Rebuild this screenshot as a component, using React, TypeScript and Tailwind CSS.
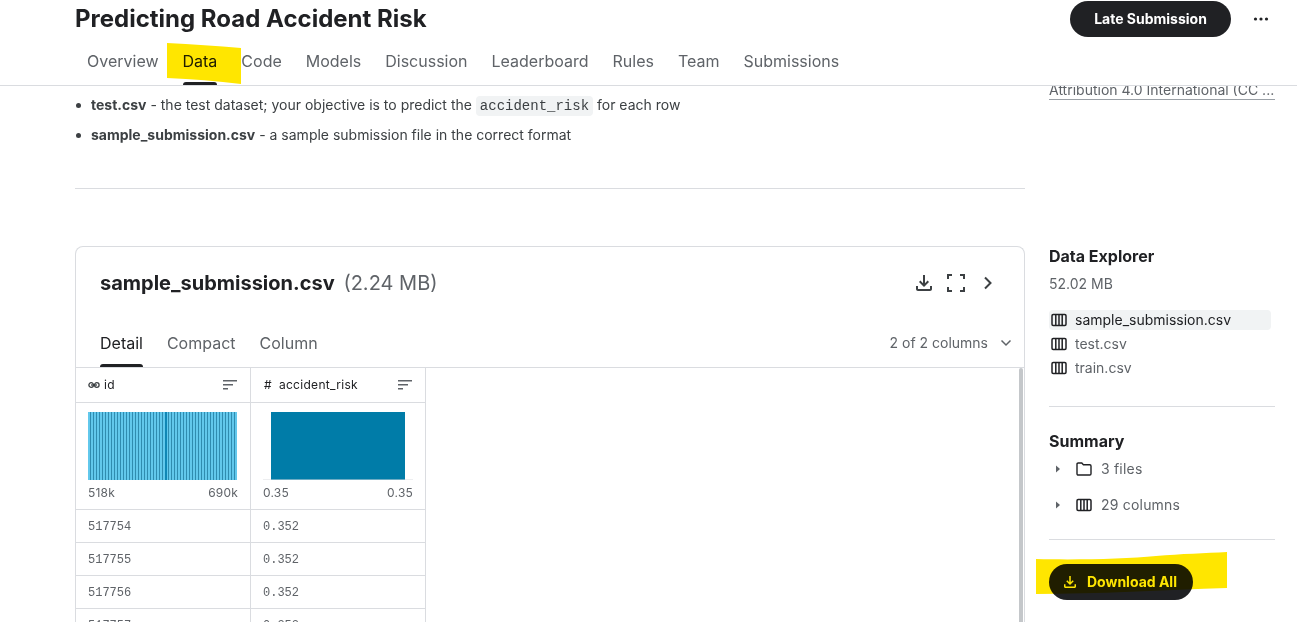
const tabs = ["Overview", "Data", "Code", "Models", "Discussion", "Leaderboard", "Rules", "Team", "Submissions"];
const files = ["sample_submission.csv", "test.csv", "train.csv"];

function DownloadIcon({ className }: { className?: string }) {
  return (
    <svg viewBox="0 0 24 24" className={className} fill="currentColor">
      <path d="M18 15v3H6v-3H4v3c0 1.1.9 2 2 2h12c1.1 0 2-.9 2-2v-3h-2zm-1-4-1.41-1.41L13 12.17V4h-2v8.17L8.41 9.59 7 11l5 5 5-5z" />
    </svg>
  );
}

function TableIcon({ className }: { className?: string }) {
  return (
    <svg viewBox="0 0 16 14" className={className} fill="none" stroke="#202124" strokeWidth="1.5">
      <rect x="1" y="1.5" width="14" height="11" rx="1.2" />
      <path d="M4.8 1.5v11M8 1.5v11M11.2 1.5v11" />
    </svg>
  );
}

function SortIcon() {
  return (
    <svg viewBox="0 0 16 12" className="h-3 w-4" fill="#5f6368">
      <rect x="1" y="1" width="14" height="1.5" />
      <rect x="1" y="5" width="10" height="1.5" />
      <rect x="1" y="9" width="5" height="1.5" />
    </svg>
  );
}

function Caret() {
  return (
    <svg viewBox="0 0 6 8" className="h-2 w-1.5" fill="#5f6368">
      <path d="M1 0.5 5 4 1 7.5z" />
    </svg>
  );
}

function Bars() {
  const bars = Array.from({ length: 50 }, (_, i) => i);
  return (
    <svg viewBox="0 0 149 68" className="h-[68px] w-[149px]" shapeRendering="crispEdges">
      <rect width="149" height="68" fill="#62c8ec" />
      {bars.map((i) => (
        <rect key={i} x={i * 3 + 2} width={i === 25 ? 2 : 1} height="68" fill={i === 25 ? "#0f86b5" : "#2f8cb0"} />
      ))}
    </svg>
  );
}

function Column({ head, icon, low, high, chart, cells }: { head: string; icon: React.ReactNode; low: string; high: string; chart: React.ReactNode; cells: string[] }) {
  return (
    <div className="w-[175px] shrink-0 border-r border-[#dadce0]">
      <div className="flex h-[35px] items-center justify-between border-b border-[#dadce0] pl-3 pr-[12px] text-xs tracking-[0.3px] text-[#202124]">
        <span className="flex items-center gap-1">
          {icon}
          {head}
        </span>
        <SortIcon />
      </div>
      <div className="h-[107px] border-b border-[#dadce0] px-3 pt-[9px]">
        {chart}
        <div className="mt-[5px] flex justify-between text-xs leading-[16px] tracking-[0.2px] text-[#5f6368]">
          <span>{low}</span>
          <span>{high}</span>
        </div>
      </div>
      {cells.map((c, i) => (
        <div key={i} className="flex h-[33px] items-center border-b border-[#dadce0] pl-3 pt-[2px] font-[family-name:'Liberation_Mono',monospace] text-xs text-[#5f6368]">
          {c}
        </div>
      ))}
    </div>
  );
}

export default function App() {
  return (
    <div className="relative h-[622px] w-full overflow-hidden bg-white font-[family-name:Inter,sans-serif] text-[#202124]">
      <header className="relative z-10 h-[86px] border-b border-[#dadce0] bg-white pl-[75px]">
        <div className="flex h-[37px] items-center justify-between pr-[24px]">
          <h1 className="text-2xl font-bold">Predicting Road Accident Risk</h1>
          <div className="flex items-center gap-[18px]">
            <button className="mt-[1px] h-9 w-[161px] rounded-full bg-[#202124] text-sm font-bold text-white">Late Submission</button>
            <svg viewBox="0 0 24 24" className="h-6 w-6" fill="#202124">
              <circle cx="6.5" cy="12" r="1.6" />
              <circle cx="12" cy="12" r="1.6" />
              <circle cx="17.5" cy="12" r="1.6" />
            </svg>
          </div>
        </div>
        <nav className="flex h-[48px] gap-6 pl-3">
          {tabs.map((t) => (
            <div key={t} className={`relative flex items-center text-base ${t === "Data" ? "text-[#202124]" : "text-[#5f6368]"}`}>
              {t}
              {t === "Data" && <span className="absolute bottom-0 left-0 right-0 h-[3px] rounded-t bg-[#202124]" />}
            </div>
          ))}
        </nav>
      </header>

      <main className="flex gap-[24px] pl-[75px]">
        <div className="w-[950px] shrink-0">
          <ul className="flex flex-col gap-2 pt-[8px] text-sm leading-[22px] text-[#3c4043]">
            {[
              <>
                <b className="font-bold">test.csv</b> - the test dataset; your objective is to predict the{" "}
                <code className="rounded bg-[#f1f3f4] px-[4px] py-[2px] font-[family-name:'Liberation_Mono',monospace] text-sm">accident_risk</code> for each row
              </>,
              <>
                <b className="font-bold">sample_submission.csv</b> - a sample submission file in the correct format
              </>,
            ].map((item, i) => (
              <li key={i} className="flex items-center">
                <span className="ml-[1px] mr-[10px] h-[5px] w-[5px] shrink-0 rounded-full bg-[#3c4043]" />
                <span>{item}</span>
              </li>
            ))}
          </ul>
          <hr className="mt-[42px] border-[#dadce0]" />
          <section className="mt-[57px] rounded-t-lg border border-b-0 border-[#dadce0]">
            <div className="flex h-[72px] items-center justify-between pl-6 pr-[24px]">
              <h2 className="text-xl font-bold">
                sample_submission.csv <span className="ml-[4px] font-normal text-[#5f6368]">(2.24 MB)</span>
              </h2>
              <div className="flex items-center gap-2 text-[#3c4043]">
                <DownloadIcon className="h-6 w-6" />
                <svg viewBox="0 0 24 24" className="h-6 w-6" fill="none" stroke="currentColor" strokeWidth="2">
                  <path d="M4 8V4h4M16 4h4v4M20 16v4h-4M8 20H4v-4" />
                </svg>
                <svg viewBox="0 0 24 24" className="h-6 w-6" fill="none" stroke="currentColor" strokeWidth="2">
                  <path d="m9 6.5 5.5 5.5L9 17.5" />
                </svg>
              </div>
            </div>
            <div className="flex h-[49px] items-stretch justify-between border-b border-[#dadce0] pb-px pl-6 pr-[12px]">
              <div className="-mb-px flex gap-6 text-base text-[#5f6368]">
                {["Detail", "Compact", "Column"].map((t) => (
                  <div key={t} className={`relative flex items-center ${t === "Detail" ? "text-[#202124]" : ""}`}>
                    {t}
                    {t === "Detail" && <span className="absolute bottom-0 left-0 right-0 h-[3px] rounded-t bg-[#202124]" />}
                  </div>
                ))}
              </div>
              <div className="flex items-center gap-[12px] text-sm text-[#5f6368]">
                2 of 2 columns
                <svg viewBox="0 0 12 8" className="h-2 w-3" fill="none" stroke="#5f6368" strokeWidth="1.5">
                  <path d="m1.5 1.5 4.5 4.5 4.5-4.5" />
                </svg>
              </div>
            </div>
            <div className="relative flex h-[300px]">
              <Column
                head="id"
                icon={
                  <svg viewBox="0 0 12 8" className="h-2 w-3" fill="none" stroke="#3c4043" strokeWidth="1.3">
                    <circle cx="3.2" cy="4" r="2.3" />
                    <circle cx="8.8" cy="4" r="2.3" />
                    <path d="M3 4h6" />
                  </svg>
                }
                low="518k"
                high="690k"
                chart={<Bars />}
                cells={["517754", "517755", "517756", "517757"]}
              />
              <Column
                head="accident_risk"
                icon={<span className="ml-[1px] mr-[3px] text-xs">#</span>}
                low="0.35"
                high="0.35"
                chart={
                  <svg viewBox="0 0 150 68" className="h-[68px] w-[150px]">
                    <rect x="8" width="134" height="68" fill="#007ca8" />
                    <rect y="67.5" width="150" height="0.5" fill="#dadce0" />
                  </svg>
                }
                cells={["0.352", "0.352", "0.352", "0.352"]}
              />
              <div className="absolute right-[1px] top-0 h-full w-1 rounded-t-sm bg-[#c4c7ca]" />
            </div>
          </section>
        </div>

        <aside className="-mt-1 w-[226px] shrink-0">
          <div className="border-b border-[#9aa0a6] pb-[1px] text-sm leading-[16px] text-[#5f6368]">Attribution 4.0 International (CC ...</div>
          <h3 className="mt-[146px] text-base font-bold leading-[20px]">Data Explorer</h3>
          <p className="mt-2 text-sm leading-[20px] text-[#5f6368]">52.02 MB</p>
          <div className="mt-[16px] flex flex-col gap-1">
            {files.map((f, i) => (
              <div key={f} className={`flex h-5 w-[222px] items-center gap-[8px] rounded pl-[2px] text-sm ${i === 0 ? "bg-[#f1f3f4] text-[#202124]" : "text-[#5f6368]"}`}>
                <TableIcon className="h-[14px] w-4" />
                {f}
              </div>
            ))}
          </div>
          <hr className="mt-[28px] border-[#dadce0]" />
          <h3 className="mt-[24px] text-base font-bold leading-[20px]">Summary</h3>
          <div className="mt-[8px] flex h-5 items-center pl-[6px] text-sm tracking-[0.2px] text-[#5f6368]">
            <Caret />
            <svg viewBox="0 0 16 14" className="ml-[15px] mr-[9px] h-[14px] w-4" fill="none" stroke="#202124" strokeWidth="1.4">
              <path d="M1 2.2c0-.7.5-1.2 1.2-1.2h3.6l1.6 1.7h6.4c.7 0 1.2.5 1.2 1.2v7.9c0 .7-.5 1.2-1.2 1.2H2.2c-.7 0-1.2-.5-1.2-1.2z" />
            </svg>
            3 files
          </div>
          <div className="mt-[16px] flex h-5 items-center pl-[6px] text-sm tracking-[0.2px] text-[#5f6368]">
            <Caret />
            <TableIcon className="ml-[15px] mr-[9px] h-[14px] w-4" />
            29 columns
          </div>
          <hr className="mt-[24px] border-[#dadce0]" />
          <button className="mt-[24px] flex h-9 w-[144px] items-center gap-[8px] rounded-full bg-[#202124] pl-[12px] text-sm font-bold text-white">
            <DownloadIcon className="h-[18px] w-[18px]" />
            Download All
          </button>
        </aside>
      </main>

      {/* marker strokes drawn over the screenshot */}
      <svg viewBox="0 0 74 41" className="pointer-events-none absolute left-[167px] top-[43px] z-20 h-[41px] w-[74px] mix-blend-multiply">
        <path d="M0 0 C25 1 50 3 74 5 V41 C50 38 25 36 0 35z" fill="#ffe600" />
      </svg>
      <svg viewBox="0 0 191 42" className="pointer-events-none absolute left-[1036px] top-[552px] z-20 h-[42px] w-[191px] mix-blend-multiply">
        <path d="M0 7 C40 8 90 7 120 4 C145 2 170 1 191 0 V36 C130 38 60 42 0 42z" fill="#ffe600" />
      </svg>
    </div>
  );
}
